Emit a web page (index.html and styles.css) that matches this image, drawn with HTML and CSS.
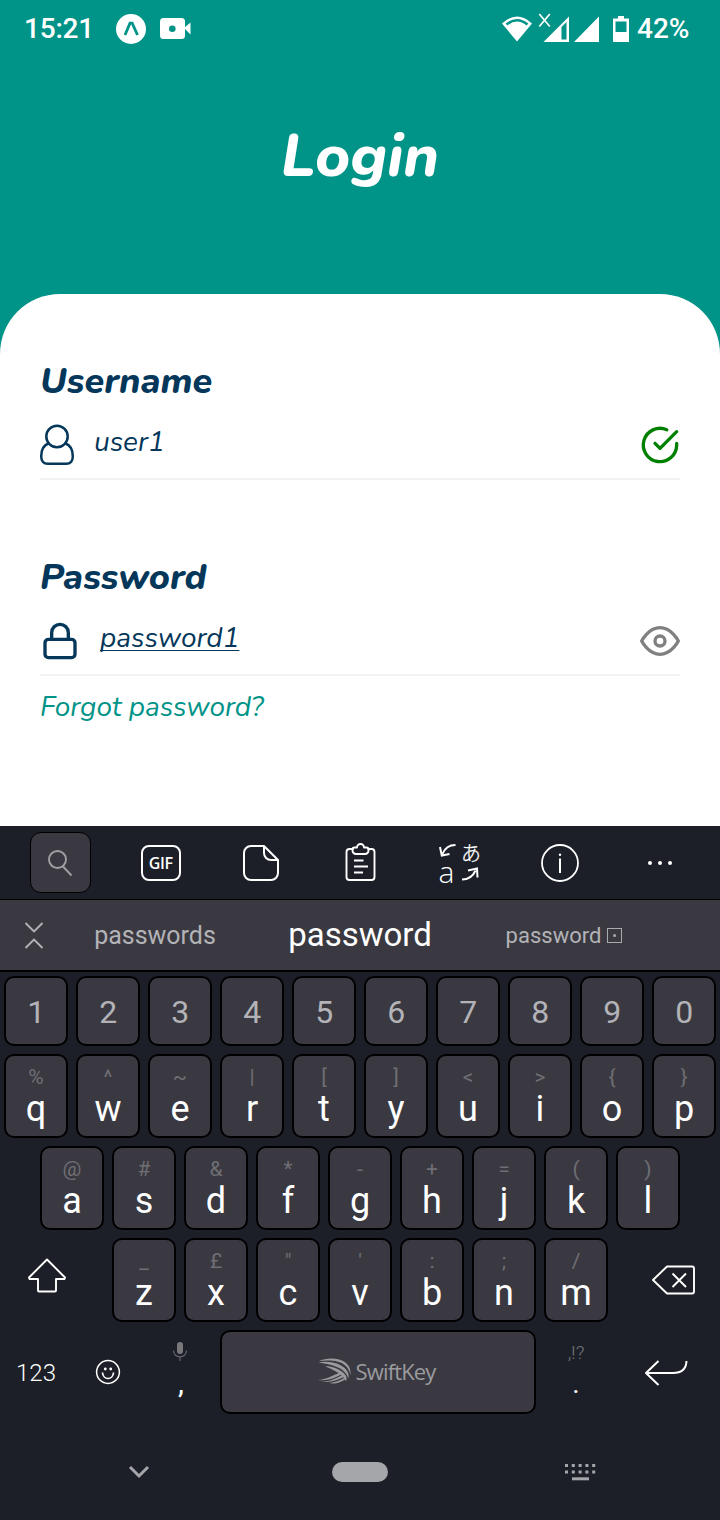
FILE: index.html
```
<!DOCTYPE html>
<html lang="en">
<head>
<meta charset="utf-8">
<title>Login</title>
<link rel="stylesheet" href="styles.css">
</head>
<body>
<div class="screen">
  <header class="hero">
    <div class="status">
      <span class="clock">15:21</span>
      <svg class="app-icon" width="30" height="30" viewBox="0 0 30 30"><circle cx="15" cy="15" r="15" fill="#fff"/><path d="M9 21 14 9.200h2.200L21.500 21" fill="none" stroke="#009387" stroke-width="2.800"/></svg>
      <svg class="cam-icon" width="31" height="22" viewBox="0 0 31 22"><rect width="25" height="21" rx="3.500" fill="#fff"/><path d="M24 10 30.500 4.500v12z" fill="#fff"/><circle cx="12.300" cy="10.700" r="3.300" fill="#009387"/></svg>
      <svg class="signals" width="130" height="34" viewBox="500 10 130 34" fill="#fff">
        <path d="M517 40.500 502 22.500Q517 8.500 532 22.500z"/>
        <path d="M506.500 23.500Q517 15 527.500 23.500" fill="none" stroke="#009387" stroke-width="2.600"/>
        <path d="M539.300 13l10.500 12.500M549.800 13l-10.500 12.500" stroke="#fff" stroke-width="1.700"/>
        <path d="M543.500 41 569 15.500V41z"/><path d="M561.500 26l5-5v17.500h-5z" fill="#009387"/>
        <path d="M574 41 599 15.500V41z"/>
        <path d="M613 17.500h5V15h6v2.500h5V41h-16z"/><path d="M615.500 20.500h11V31h-11z" fill="#009387"/>
      </svg>
      <span class="battery">42%</span>
    </div>
    <h1 class="title">Login</h1>
  </header>

  <main class="card">
    <section class="group">
      <h2 class="label">Username</h2>
      <div class="field">
        <svg class="lead" width="35" height="41" viewBox="0 0 35 41" fill="none" stroke="#05375a" stroke-width="2.500"><circle cx="17" cy="11.500" r="10.700"/><path d="M8.800 18.300C3.500 20.200 1.200 25.500 1.200 31.500c0 4.500 2.500 7.300 6.500 7.300h18.600c4 0 6.500-2.800 6.500-7.300 0-6-2.300-11.300-7.600-13.200"/></svg>
        <span class="value">user1</span>
        <svg class="trail" width="40" height="40" viewBox="0 0 24 24" fill="none" stroke="#008000" stroke-width="2" stroke-linecap="round" stroke-linejoin="round"><path d="M22 11.080V12a10 10 0 1 1-5.930-9.140"/><path d="M22 4 12 14.010l-3-3"/></svg>
      </div>
    </section>
    <section class="group">
      <h2 class="label">Password</h2>
      <div class="field">
        <svg class="lead" width="40" height="40" viewBox="0 0 24 24" fill="none" stroke="#05375a" stroke-width="2"><rect x="3" y="11" width="18" height="11" rx="2"/><path d="M7 11V7a5 5 0 0 1 10 0v4"/></svg>
        <span class="value pass-value">password1</span>
        <svg class="trail" width="40" height="40" viewBox="0 0 24 24" fill="none" stroke="#808080" stroke-width="2" stroke-linejoin="round"><path d="M1 12s4-8 11-8 11 8 11 8-4 8-11 8-11-8-11-8z"/><circle cx="12" cy="12" r="3"/></svg>
      </div>
    </section>
    <a class="forgot">Forgot password?</a>
  </main>

  <div class="keyboard">
    <div class="toolbar">
      <div class="search"><svg width="28" height="28" viewBox="0 0 28 28" fill="none" stroke="#a0a0a3" stroke-width="1.900"><circle cx="11.500" cy="10.500" r="8.500"/><path d="M17 17.500 25.500 26.500"/></svg></div>
      <svg width="42" height="42" viewBox="-2 0 42 42"><rect x="1" y="4" width="38" height="34" rx="7" fill="none" stroke="#fff" stroke-width="2"/><text class="gif" x="19.700" y="27">GIF</text></svg>
      <svg width="42" height="42" viewBox="-2 0 42 42" fill="none" stroke="#fff" stroke-width="2" stroke-linejoin="round"><path d="M10 4h13L37 18v13a7 7 0 0 1-7 7H10a7 7 0 0 1-7-7V11a7 7 0 0 1 7-7z"/><path d="M23 4v7a7 7 0 0 0 7 7h7"/></svg>
      <svg width="42" height="42" viewBox="-1.500 0 42 42" fill="none" stroke="#fff" stroke-width="1.900" stroke-linejoin="round"><path d="M13 7H9a3 3 0 0 0-3 3v25a3 3 0 0 0 3 3h22a3 3 0 0 0 3-3V10a3 3 0 0 0-3-3h-4"/><path d="M14 5.500h2.500a3.500 3.500 0 0 1 7 0H26a2 2 0 0 1 2 2v1a3.500 3.500 0 0 1-3.500 3.500h-9A3.500 3.500 0 0 1 12 8.500v-1a2 2 0 0 1 2-2z"/><path d="M13.500 18.500H23M13.500 24.500h14M13.500 30.500h9"/></svg>
      <svg class="translate" width="46" height="46" viewBox="0 0 46 46" fill="none" stroke="#fff" stroke-width="2"><text class="jp" x="24" y="20.500">あ</text><text class="latin" x="1.500" y="42.500">a</text><path d="M18.500 5Q9 5 5.500 14M3 7l1.800 8.500L12.500 14M25 39.500q9.500 0 13.500-9M31 30.500l9-2 .500 9"/></svg>
      <svg width="42" height="42" viewBox="0 0 42 42" fill="none" stroke="#fff"><circle cx="21" cy="21" r="18" stroke-width="1.800"/><path d="M21 16.500V31" stroke-width="2"/><circle cx="21" cy="12.700" r="1.200" fill="#fff" stroke="none"/></svg>
      <svg width="42" height="42" viewBox="0 0 42 42" fill="#fff"><circle cx="11" cy="21" r="2"/><circle cx="21" cy="21" r="2"/><circle cx="31" cy="21" r="2"/></svg>
    </div>
    <div class="suggestions">
      <svg width="20" height="28" viewBox="0 0 20 28" fill="none" stroke="#b3b3b7" stroke-width="1.900"><path d="m1.500 2 8.500 8.500L18.500 2M1.500 27 10 18.500l8.500 8.500"/></svg>
      <span class="s-left">passwords</span>
      <span class="s-mid">password</span>
      <span class="s-right">password<svg width="15" height="15" viewBox="0 0 15 15"><rect x=".5" y=".5" width="14" height="14" fill="none" stroke="#aaaaae"/><rect x="6.300" y="6.300" width="2.500" height="2.500" fill="#b3b3b7"/></svg></span>
    </div>
    <div class="keys">
      <div class="row numbers"><b class="key">1</b><b class="key">2</b><b class="key">3</b><b class="key">4</b><b class="key">5</b><b class="key">6</b><b class="key">7</b><b class="key">8</b><b class="key">9</b><b class="key">0</b></div>
      <div class="row">
        <div class="key"><i>%</i><b>q</b></div><div class="key"><i>^</i><b>w</b></div><div class="key"><i>~</i><b>e</b></div><div class="key"><i>|</i><b>r</b></div><div class="key"><i>[</i><b>t</b></div><div class="key"><i>]</i><b>y</b></div><div class="key"><i>&lt;</i><b>u</b></div><div class="key"><i>&gt;</i><b>i</b></div><div class="key"><i>{</i><b>o</b></div><div class="key"><i>}</i><b>p</b></div>
      </div>
      <div class="row">
        <div class="key"><i>@</i><b>a</b></div><div class="key"><i>#</i><b>s</b></div><div class="key"><i>&amp;</i><b>d</b></div><div class="key"><i>*</i><b>f</b></div><div class="key"><i>-</i><b>g</b></div><div class="key"><i>+</i><b>h</b></div><div class="key"><i>=</i><b>j</b></div><div class="key"><i>(</i><b>k</b></div><div class="key"><i>)</i><b>l</b></div>
      </div>
      <div class="row">
        <div class="side shift"><svg width="40" height="36" viewBox="0 0 40 36" fill="none" stroke="#fff" stroke-width="1.900" stroke-linejoin="round"><path d="M20 1.500 38 19.500 37.500 21H29v11.500a1 1 0 0 1-1 1H12a1 1 0 0 1-1-1V21H2.500L2 19.500z"/></svg></div>
        <div class="key"><i>_</i><b>z</b></div><div class="key"><i>£</i><b>x</b></div><div class="key"><i>"</i><b>c</b></div><div class="key"><i>'</i><b>v</b></div><div class="key"><i>:</i><b>b</b></div><div class="key"><i>;</i><b>n</b></div><div class="key"><i>/</i><b>m</b></div>
        <div class="side erase"><svg width="43" height="30" viewBox="0 0 43 30" fill="none" stroke="#fff" stroke-width="1.900" stroke-linejoin="round"><path d="M15 1.500h25a2 2 0 0 1 2 2v23a2 2 0 0 1-2 2H15L1 15z"/><path d="m20.500 8.500 13.500 13.500M34 8.500 20.500 22"/></svg></div>
      </div>
      <div class="row bottom">
        <div class="cell digits">123</div>
        <div class="cell"><svg width="26" height="26" viewBox="0 0 26 26" fill="none" stroke="#fff" stroke-width="1.500"><circle cx="13" cy="13" r="11.400"/><path d="M7.500 13.500c.5 8 10.500 8 11 0" stroke-width="1.700"/><circle cx="10.300" cy="10" r="1.400" fill="#fff" stroke="none"/><circle cx="15.700" cy="10" r="1.400" fill="#fff" stroke="none"/></svg></div>
        <div class="cell stack"><svg width="16" height="20" viewBox="0 0 16 20"><rect x="5" y="0" width="6" height="12" rx="3" fill="#77777c"/><path d="M1.500 8.500c0 8.500 13 8.500 13 0M8 15v4" fill="none" stroke="#66666b" stroke-width="1.200"/></svg><b>,</b></div>
        <div class="space">
          <svg width="35" height="26" viewBox="1 0 35 26" fill="#9b9b9e">
            <path d="M2 3C8 0 20-1 27 3.500 32.500 7 34 12 33.500 17 32 10 28 5.500 21 3.700 14 2 8 2.500 2 3z"/>
            <path d="M1.500 4.500C9 3 18 4 24 7.500 30 11 32.500 15.500 31.500 20.500 29.500 15 26 11.500 20 9 13.500 6.300 7 5.500 1.500 4.500z"/>
            <path d="M8 8C16 8.500 24 11.500 28 16.500 30 19 30 21.500 29 23 26.500 18.500 23 15.500 18 13 14 11 11 9.500 8 8z"/>
            <path d="M1 22C9 21.500 16 17.500 23 14.500L25 16C18 20 10 23 1 22zM5 23.800C13 23.500 19 20.500 25.500 17L27 18.800C20 22.500 13 24.800 5 23.800zM12 25C18 24.500 23 22.500 27.500 19.800L28 21.500C24 24.500 18 26.300 12 25z"/>
          </svg>
          <span>SwiftKey</span>
        </div>
        <div class="cell stack dot"><i>,!?</i><b>.</b></div>
        <div class="cell enter"><svg width="44" height="28" viewBox="0 0 44 28" fill="none" stroke="#fff" stroke-width="2" stroke-linejoin="round"><path d="M14.500 2 2 14l12.500 12M2 14h27Q42 14 42.500 2"/></svg></div>
      </div>
    </div>
    <nav class="navbar">
      <svg width="22" height="14" viewBox="0 0 22 14" fill="none" stroke="#a5a6aa" stroke-width="3"><path d="m2 2 9 9 9-9"/></svg>
      <span class="home"></span>
      <svg width="32" height="18" viewBox="0 0 32 18" fill="none" stroke="#a5a6aa" stroke-width="3"><path d="M1 2.500h31M1 9h31" stroke-dasharray="3 3.800"/><path d="M8 15.800h17"/></svg>
    </nav>
  </div>
</div>
</body>
</html>
```
FILE: styles.css
```
* { box-sizing: border-box; margin: 0; padding: 0; }
body { background: #009387; font-family: Roboto, sans-serif; }
svg { display: block; flex: none; overflow: visible; }
b { font-weight: 400; }
i { font-style: normal; }
.screen { width: 720px; height: 1520px; display: flex; flex-direction: column; overflow: hidden; }

.hero { height: 294px; }
.status { height: 56px; display: flex; align-items: center; padding: 1px 0 0 24px; color: #fff; font-size: 28px; font-weight: 500; }
.clock { width: 92px; letter-spacing: -.2px; }
.cam-icon { margin-left: 14px; }
.signals { margin: -1px 0 0 309px; }
.battery { margin-left: 7px; }
.title { margin-top: 64px; text-align: center; color: #fff; font: italic 800 60px/72px Nunito, Lato, sans-serif; }

.card { height: 532px; padding: 66px 40px 0; background: #fff; border-radius: 60px 60px 0 0; font-family: Nunito, Lato, sans-serif; font-style: italic; color: #05375a; }
.label { font-size: 36px; line-height: 44px; font-weight: 800; white-space: nowrap; }
.field { display: flex; align-items: flex-start; height: 79px; margin-top: -3px; padding-top: 22px; border-bottom: 2px solid #f2f2f2; }
.group + .group { padding-top: 76px; }
.lead { margin-top: 2px; }
.trail { margin: 2px 0 0 auto; }
.value { font-size: 28px; line-height: 34px; margin: 2px 0 0 19px; font-weight: 400; letter-spacing: -.03px; }
.pass-value { margin-left: 20px; text-decoration: underline; text-decoration-thickness: 1px; text-underline-offset: 3px; text-decoration-skip-ink: none; }
.forgot { display: block; margin-top: 14px; color: #009387; font-size: 28px; line-height: 34px; letter-spacing: -.06px; }

.keyboard { height: 694px; background: #1d1f28; }
.toolbar { height: 74px; border-bottom: 1px solid #000; display: grid; grid-template-columns: repeat(7, 100px); padding: 0 10px; place-items: center; }
.search { width: 61px; height: 61px; background: #3a3941; border: 1px solid #000; border-radius: 11px; display: grid; place-items: center; }
.gif { font: 600 16px "Open Sans", sans-serif; fill: #fff; text-anchor: middle; letter-spacing: -.4px; }
.jp { font: 300 20px "Noto Sans CJK JP", sans-serif; fill: #fff; stroke: #fff; stroke-width: .3px; }
.latin { font: 300 30px "Open Sans", sans-serif; fill: #fff; stroke: none; }
.suggestions { height: 72px; background: #3a3941; border-bottom: 2px solid #000; display: grid; grid-template-columns: 68px 174px 236px 172px; place-items: center; color: #b3b3b7; }
.s-left { font-size: 25px; }
.s-mid { font-size: 33px; color: #fff; margin-top: -2px; }
.s-right { font-size: 22px; display: flex; align-items: center; gap: 6px; }

.keys { padding: 4px 4px 0; display: flex; flex-direction: column; gap: 8px; }
.row { display: flex; justify-content: center; gap: 8px; height: 84px; }
.numbers { height: 70px; color: #b3b3b7; font-size: 32px; }
.key { width: 64px; background: #3a3941; border: 2px solid #000; border-radius: 10px; text-align: center; }
.numbers .key { line-height: 68px; padding-left: .5px; }
.key i { display: block; margin-top: 9px; height: 24px; font-size: 21px; line-height: 24px; color: #6f6e74; }
.key > b { display: block; font-size: 36px; line-height: 40px; color: #fff; }
.side { width: 100px; display: flex; }
.shift { padding: 20px 0 0 23px; }
.erase { padding: 27px 0 0 36px; }
.bottom { gap: 0; justify-content: flex-start; color: #fff; }
.cell { width: 72px; display: grid; place-items: center; }
.digits { width: 64px; font-size: 24px; font-weight: 300; padding-top: 2px; }
.bottom .cell:nth-child(2) { width: 80px; }
.stack { width: 64px; display: flex; flex-direction: column; align-items: center; padding-top: 12px; font-size: 30px; line-height: 36px; }
.stack b { margin: 3px 0 0 2px; }
.space { width: 316px; margin-left: 8px; background: #3a3941; border: 2px solid #000; border-radius: 10px; display: flex; align-items: center; justify-content: center; gap: 3px; color: #9b9b9e; font: 22px "Open Sans", sans-serif; letter-spacing: -.85px; padding: 0 3px 2px 0; }
.bottom .dot { width: 80px; }
.dot i { font-size: 19px; line-height: 22px; font-weight: 300; color: #77777c; }
.bottom .dot b { margin: 2px 0 0; font-size: 28px; }
.enter { padding-top: 1px; }
.bottom .enter { width: 100px; }
.navbar { display: flex; align-items: center; margin-top: 48px; padding-left: 128px; }
.home { width: 56px; height: 20px; border-radius: 10px; background: #a5a6aa; margin: 0 176px 0 182px; }
```
